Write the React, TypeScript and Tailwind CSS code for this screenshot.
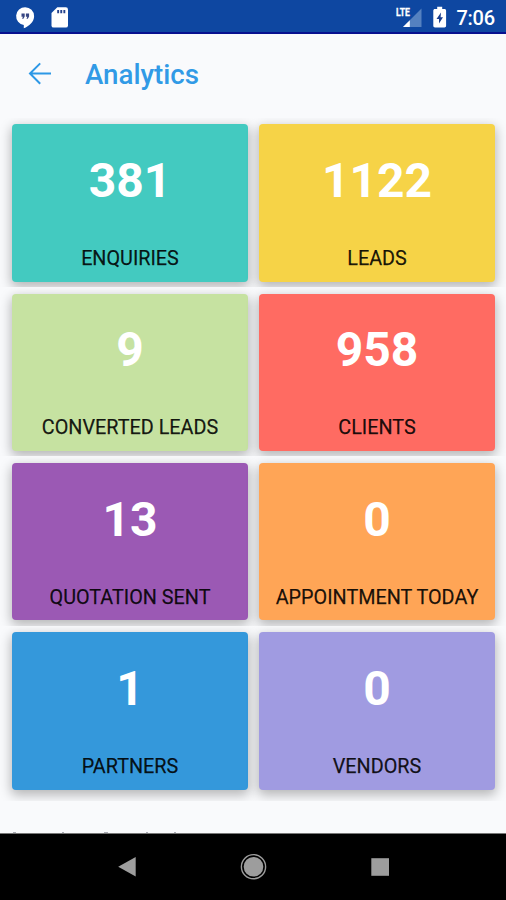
const rows = [
  [
    { value: '381', label: 'ENQUIRIES', color: 'bg-[#43cac0]' },
    { value: '1122', label: 'LEADS', color: 'bg-[#f6d347]' },
  ],
  [
    { value: '9', label: 'CONVERTED LEADS', color: 'bg-[#c6e2a1]' },
    { value: '958', label: 'CLIENTS', color: 'bg-[#ff6b62]' },
  ],
  [
    { value: '13', label: 'QUOTATION SENT', color: 'bg-[#9b59b4]' },
    { value: '0', label: 'APPOINTMENT TODAY', color: 'bg-[#ffa556]' },
  ],
  [
    { value: '1', label: 'PARTNERS', color: 'bg-[#3498db]' },
    { value: '0', label: 'VENDORS', color: 'bg-[#a09be1]' },
  ],
];

function StatusBar() {
  return (
    <header className="h-[34px] shrink-0 border-b-2 border-[#07108f] bg-[#0e47a1]">
      <svg width="506" height="32" viewBox="0 0 506 32" className="block">
        <path d="M25.2 7.2a9 9 0 0 0-1.4 17.9v3.2c5.3-2.3 10.3-6.6 10.3-12.1a9 9 0 0 0-8.9-9z" fill="#fff" />
        <path d="M21.5 13.4h3.2v3.2l-1.3 2.2h-1.3l.8-2.1h-1.4zM25.9 13.4h3.2v3.2l-1.3 2.2h-1.3l.8-2.1h-1.4z" fill="#384783" />
        <path d="M57.3 7.2h8.5a2.2 2.2 0 0 1 2.2 2.2v16a2.2 2.2 0 0 1-2.2 2.2H53.7a2.2 2.2 0 0 1-2.2-2.2V13z" fill="#fff" />
        <path d="M57.2 10h1.9v3.3h-1.9zM60.3 10h1.9v3.3h-1.9zM63.4 10h1.9v3.3h-1.9z" fill="#25428c" />
        <path d="M421.5 8.5V27H403z" fill="#5581c0" />
        <path d="M409.8 20.2V27H403z" fill="#fff" />
        <text x="396" y="16.4" fill="#fff" stroke="#fff" strokeWidth="0.3" fontFamily="Roboto, sans-serif" fontWeight="700" fontSize="11.5" textLength="14" lengthAdjust="spacingAndGlyphs">LTE</text>
        <path d="M437.2 6.8h5v2.3h2.2c1 0 1.7.7 1.7 1.7v15c0 1-.7 1.7-1.7 1.7H435c-1 0-1.7-.7-1.7-1.7v-15c0-1 .7-1.7 1.7-1.7h2.2z" fill="#fff" />
        <path d="M441 12.5l-4.5 6.4h2.5v4.6l4-6.2h-2.4z" fill="#183d8e" />
        <text x="456.5" y="25" fill="#fff" fontFamily="Roboto, sans-serif" fontWeight="500" fontSize="20" textLength="38.5">7:06</text>
      </svg>
    </header>
  );
}

function NavigationBar() {
  return (
    <footer className="flex h-[67px] shrink-0 justify-center border-t border-[#777] bg-black">
      <svg width="506" height="66" viewBox="0 0 506 66" className="block">
        <path d="M118.2 32.7L135.7 23v19.5z" fill="#9d9d9d" />
        <circle cx="253.5" cy="32.7" r="9.8" fill="#9d9d9d" />
        <circle cx="253.5" cy="32.7" r="12.1" fill="none" stroke="#9d9d9d" strokeWidth="1.4" />
        <path d="M371.3 24.2H389v17.6h-17.7z" fill="#9d9d9d" />
      </svg>
    </footer>
  );
}

// Upper edge of the next section's heading, peeking out above the navigation bar.
function NextSectionEdge() {
  return (
    <svg width="506" height="1" viewBox="0 0 506 1" className="block shrink-0">
      <path d="M13 0h3v1h-3zM62 0h2v1h-2zM104 0h4v1h-4zM146 0h2v1h-2zM174 0h2v1h-2z" fill="#a9abb3" />
    </svg>
  );
}

export default function App() {
  return (
    <div className="flex h-[900px] w-[506px] flex-col overflow-hidden bg-[#f9fafc] font-[Roboto,sans-serif]">
      <StatusBar />
      <div className="flex h-[84px] shrink-0 items-center pb-1 pl-7">
        <svg width="24" height="24" viewBox="0 0 24 24" fill="none" stroke="#2d98e6" strokeWidth="2" className="block">
          <path d="M23 11.5H2.2M12.2 1.4L2 11.5l10.2 10.2" />
        </svg>
        <h1 className="pt-px pl-[33px] text-[27.7px] leading-8 font-medium text-[#319ae6]">Analytics</h1>
      </div>
      <main className="flex min-h-0 grow flex-col">
        {rows.map((row, index) => (
          <section
            key={index}
            className="flex h-[169.2px] shrink-0 gap-[11px] overflow-hidden px-[11.5px] pt-[6.4px] last:h-[175px]"
          >
            {row.map((card) => (
              <article
                key={card.label}
                className={`flex h-[157.7px] w-[236px] flex-col items-center rounded-[4px] shadow-[0_4px_12px_1px_rgba(0,0,0,0.28)] ${card.color}`}
              >
                <strong className="pt-[31.8px] pl-px text-[48px] leading-[50px] font-bold text-white">{card.value}</strong>
                <span className="pt-[41px] pl-px text-[19.8px] leading-6 whitespace-nowrap text-black/90 [-webkit-text-stroke:0.25px_rgba(0,0,0,0.8)]">{card.label}</span>
              </article>
            ))}
          </section>
        ))}
      </main>
      <NextSectionEdge />
      <NavigationBar />
    </div>
  );
}
